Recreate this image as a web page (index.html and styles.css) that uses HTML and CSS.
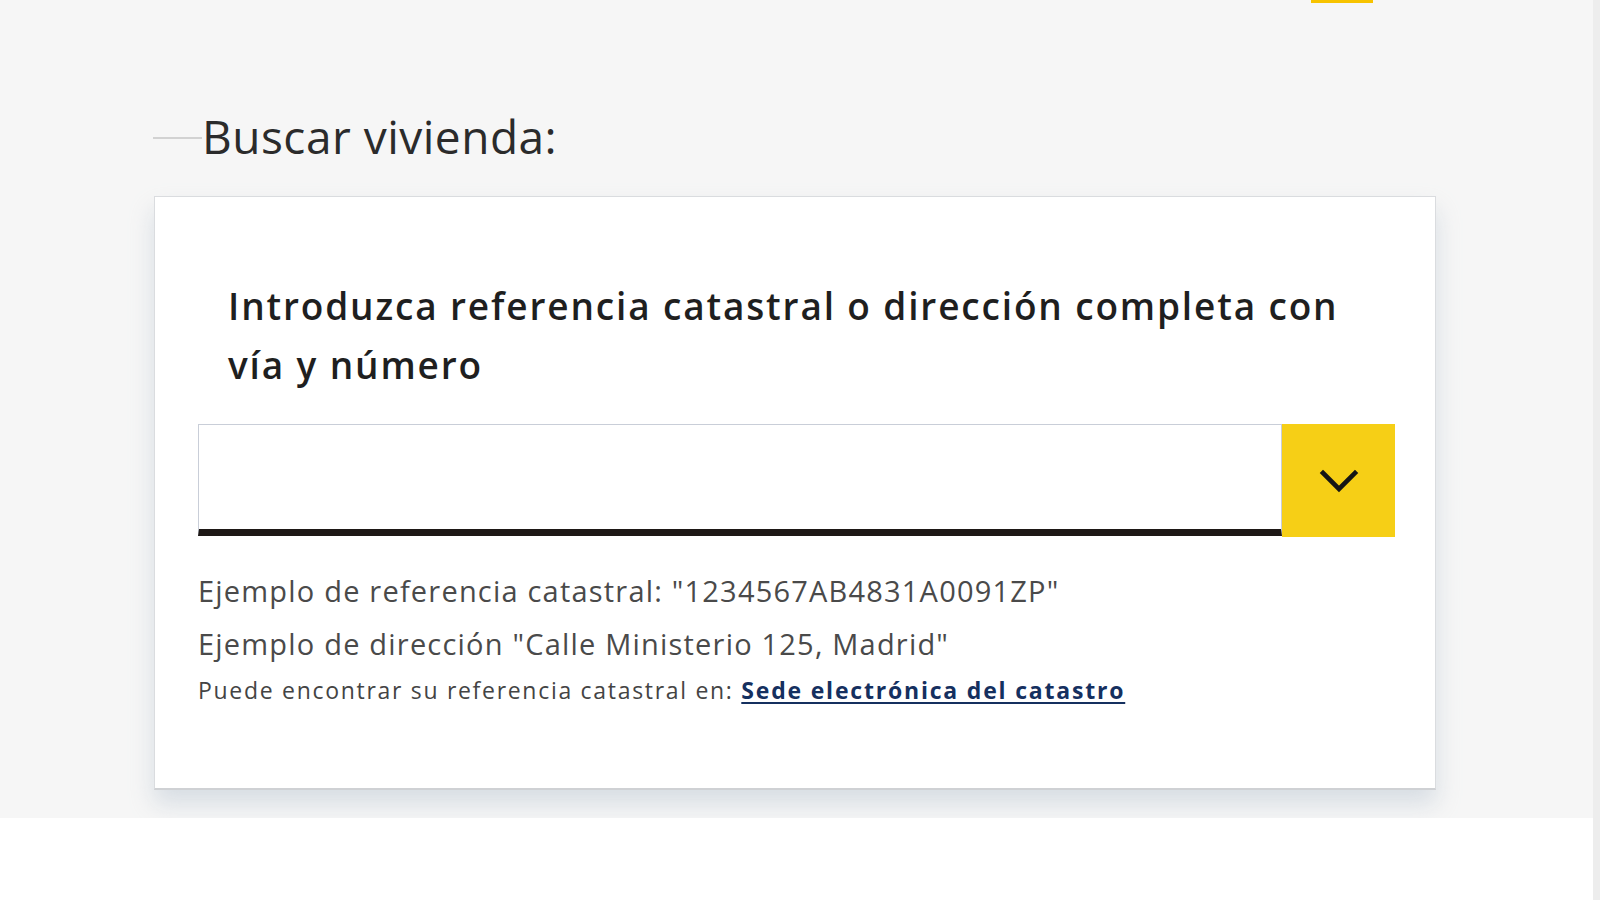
FILE: index.html
```html
<!DOCTYPE html>
<html lang="es">
<head>
<meta charset="utf-8">
<title>Buscar vivienda</title>
<link rel="stylesheet" href="styles.css">
</head>
<body>
<div class="scrollbar"></div>
<section class="search-section">
  <div class="top-accent"></div>
  <div class="title-row">
    <span class="title-line"></span>
    <h2 class="title">Buscar vivienda:</h2>
  </div>
  <div class="card">
    <h3 class="card-heading">Introduzca referencia catastral o dirección completa con vía y número</h3>
    <div class="search-row">
      <input class="search-input" type="text" aria-label="Referencia catastral o dirección">
      <button class="search-btn" aria-label="Desplegar">
        <svg width="40" height="24" viewBox="0 0 40 24"><polyline points="4,4 20,20 36,4" fill="none" stroke="#151515" stroke-width="4.6" stroke-linecap="square" stroke-linejoin="miter"/></svg>
      </button>
    </div>
    <p class="example first">Ejemplo de referencia catastral: "1234567AB4831A0091ZP"</p>
    <p class="example">Ejemplo de dirección "Calle Ministerio 125, Madrid"</p>
    <p class="hint">Puede encontrar su referencia catastral en: <a class="hint-link" href="#">Sede electrónica del catastro</a></p>
  </div>
</section>
<section class="below"></section>
</body>
</html>
```
FILE: styles.css
```css
html, body {
  margin: 0;
  padding: 0;
}
body {
  background: #ffffff;
  font-family: "Open Sans", "Noto Sans", sans-serif;
  color: #333333;
}
.scrollbar {
  position: fixed;
  top: 0;
  right: 0;
  width: 7px;
  height: 100%;
  background: #ededed;
}
.search-section {
  background: #f6f6f6;
  height: 818px;
  box-sizing: border-box;
}
.top-accent {
  margin-left: 1311px;
  width: 62px;
  height: 3px;
  background: #f7c300;
}
.title-row {
  display: flex;
  align-items: center;
  margin-left: 153px;
  margin-top: 105px;
  height: 56px;
}
.title-line {
  width: 49px;
  height: 2px;
  background: #d2d2d2;
  margin-top: 3px;
}
.title {
  margin: 0;
  font-weight: 400;
  font-size: 46px;
  line-height: 56px;
  letter-spacing: 0.5px;
  color: #2b2b2b;
}
.card {
  margin-top: 32px;
  margin-left: 154px;
  width: 1282px;
  height: 594px;
  box-sizing: border-box;
  background: #ffffff;
  border: 1px solid #dadcdf;
  border-bottom: 2px solid #cfd1d4;
  box-shadow: 0 14px 22px rgba(180, 192, 206, 0.45);
  padding: 79px 40px 0 43px;
}
.card-heading {
  margin: 0 0 30px 30px;
  font-size: 37px;
  line-height: 59px;
  font-weight: 600;
  letter-spacing: 1.85px;
  color: #1f1f1f;
  max-width: 1150px;
}
.search-row {
  display: flex;
  height: 112px;
}
.search-input {
  flex: 1;
  margin: 0;
  box-sizing: border-box;
  height: 112px;
  border: 1px solid #c9ced8;
  border-bottom: 7px solid #1e1816;
  background: #ffffff;
  outline: none;
  font: inherit;
  font-size: 29px;
  padding: 0 20px;
}
.search-btn {
  width: 113px;
  height: 113px;
  margin: 0;
  padding: 0;
  border: none;
  background: #f6cf16;
  display: flex;
  align-items: center;
  justify-content: center;
}
.example {
  margin: 0;
  font-size: 29px;
  line-height: 39px;
  letter-spacing: 1.2px;
  color: #4a4a4a;
}
.example.first {
  margin-top: 35px;
  margin-bottom: 14px;
}
.hint {
  margin: 12px 0 0;
  font-size: 23px;
  line-height: 31px;
  letter-spacing: 1.7px;
  color: #444444;
}
.hint-link {
  color: #15305f;
  font-weight: 700;
  letter-spacing: 1.8px;
  text-decoration: underline;
  text-underline-offset: 3px;
}
.below {
  height: 82px;
  background: #ffffff;
}
```
